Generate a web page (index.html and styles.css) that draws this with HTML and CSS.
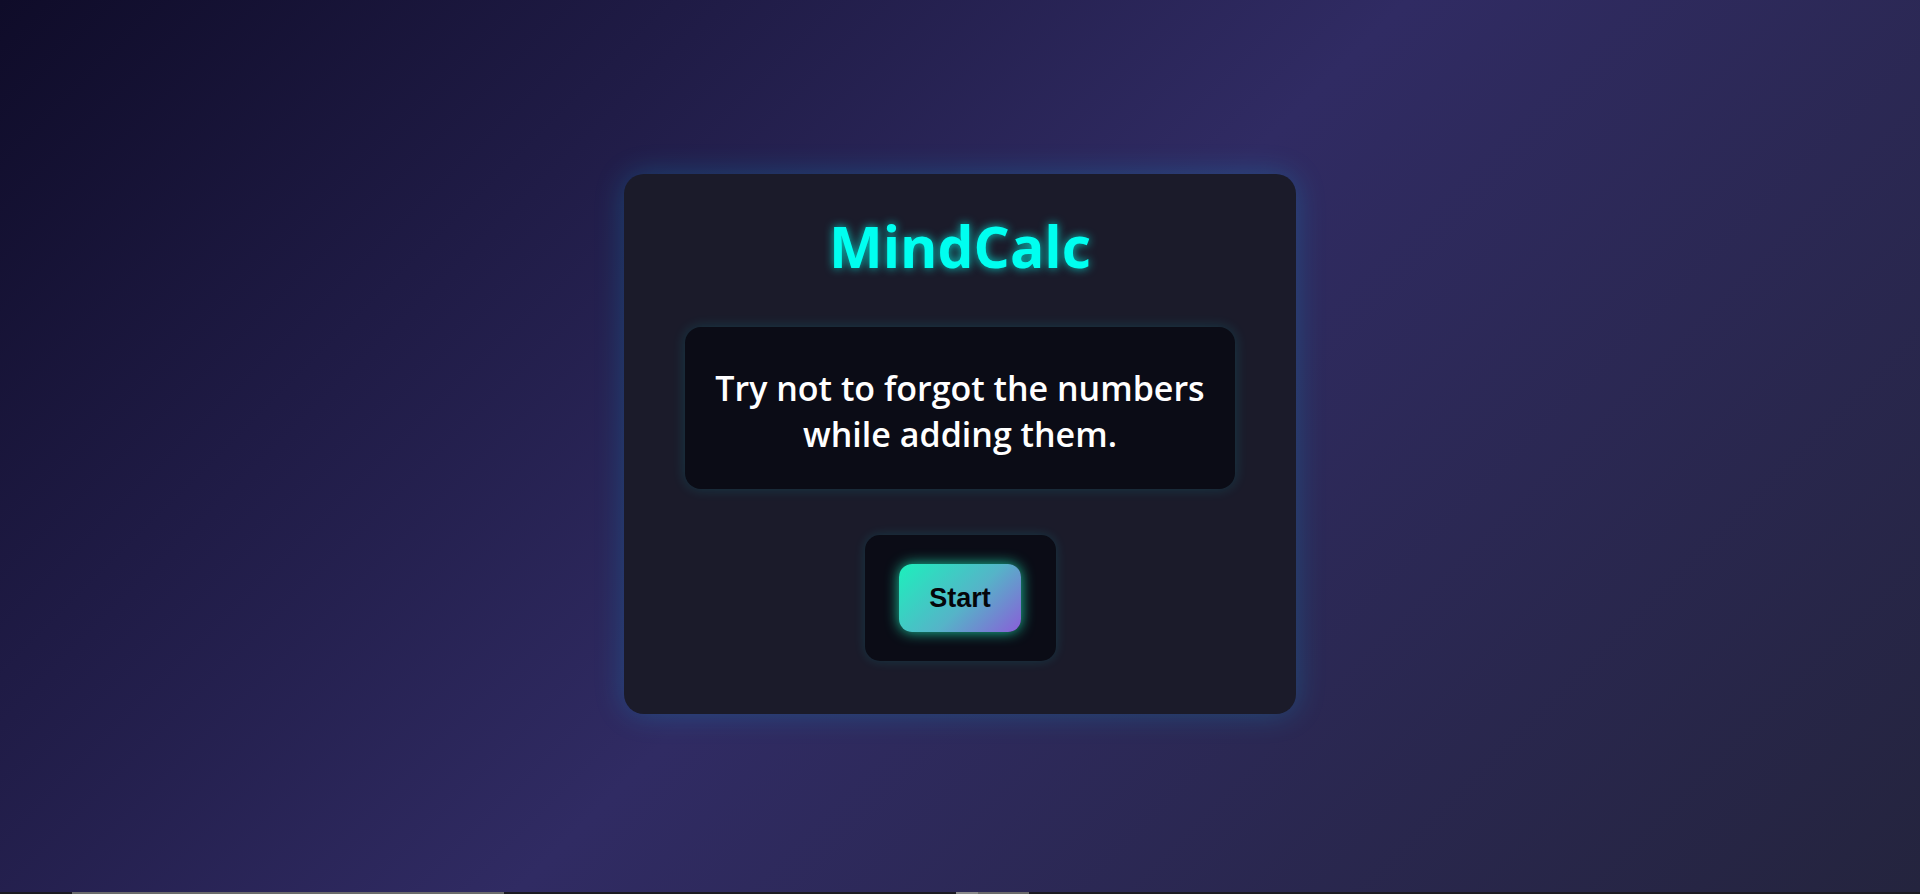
FILE: index.html
```html
<!DOCTYPE html>
<html lang="en">
<head>
<meta charset="utf-8">
<title>MindCalc</title>
<link rel="stylesheet" href="styles.css">
</head>
<body>
<main class="stage">
  <section class="card">
    <h1 class="title">MindCalc</h1>
    <div class="desc">
      <p class="desc-text">Try not to forgot the numbers while adding them.</p>
    </div>
    <div class="btn-wrap">
      <button class="start-btn">Start</button>
    </div>
  </section>
</main>
<div class="strip">
  <span class="gap-a"></span>
  <span class="thumb-a"></span>
  <span class="gap-b"></span>
  <span class="thumb-b1"></span>
  <span class="thumb-b2"></span>
</div>
</body>
</html>
```
FILE: styles.css
```css
html, body {
  margin: 0;
  padding: 0;
}
body {
  width: 1920px;
  height: 894px;
  display: flex;
  flex-direction: column;
  overflow: hidden;
  background: linear-gradient(135deg, #0f0c29 0%, #302b63 50%, #24243e 100%);
  font-family: "Open Sans", "Noto Sans", sans-serif;
}
.stage {
  flex: 1;
  display: flex;
  align-items: center;
  justify-content: center;
  padding-bottom: 4px;
}
.card {
  width: 672px;
  height: 540px;
  box-sizing: border-box;
  padding: 38px 60px 0;
  background: #1b1b2a;
  border-radius: 20px;
  box-shadow: 0 0 30px rgba(0, 200, 255, 0.22);
  display: flex;
  flex-direction: column;
  align-items: center;
}
.title {
  margin: 0;
  font-size: 57px;
  line-height: 68px;
  font-weight: 700;
  color: #00fff0;
  text-shadow: 0 0 10px rgba(0, 255, 240, 0.75);
}
.desc {
  margin-top: 47px;
  width: 550px;
  height: 162px;
  box-sizing: border-box;
  background: #0b0c16;
  border-radius: 16px;
  box-shadow: 0 0 14px rgba(0, 255, 255, 0.14);
  display: flex;
  align-items: center;
  justify-content: center;
  padding: 5px 22px 0;
}
.desc-text {
  margin: 0;
  color: #ffffff;
  font-size: 34px;
  font-weight: 600;
  line-height: 46px;
  text-align: center;
}
.btn-wrap {
  margin-top: 46px;
  width: 191px;
  height: 126px;
  box-sizing: border-box;
  background: #0b0c16;
  border-radius: 15px;
  box-shadow: 0 0 12px rgba(0, 255, 255, 0.13);
  display: flex;
  align-items: center;
  justify-content: center;
}
.start-btn {
  width: 122px;
  height: 68px;
  border: none;
  border-radius: 13px;
  background: linear-gradient(135deg, #1cf0bc 0%, #55b4c8 55%, #8a5ed8 100%);
  box-shadow: 0 0 14px rgba(29, 233, 182, 0.85);
  font-family: "Liberation Sans", Arial, sans-serif;
  font-weight: 700;
  font-size: 27px;
  color: #05060a;
  cursor: pointer;
  padding: 0;
}
.strip {
  height: 2px;
  display: flex;
  background: #1c1b22;
}
.gap-a { width: 72px; }
.thumb-a { width: 432px; background: #6b6b6b; }
.gap-b { width: 452px; }
.thumb-b1 { width: 22px; background: #8a8a8a; }
.thumb-b2 { width: 51px; background: #6b6b6b; }
```
